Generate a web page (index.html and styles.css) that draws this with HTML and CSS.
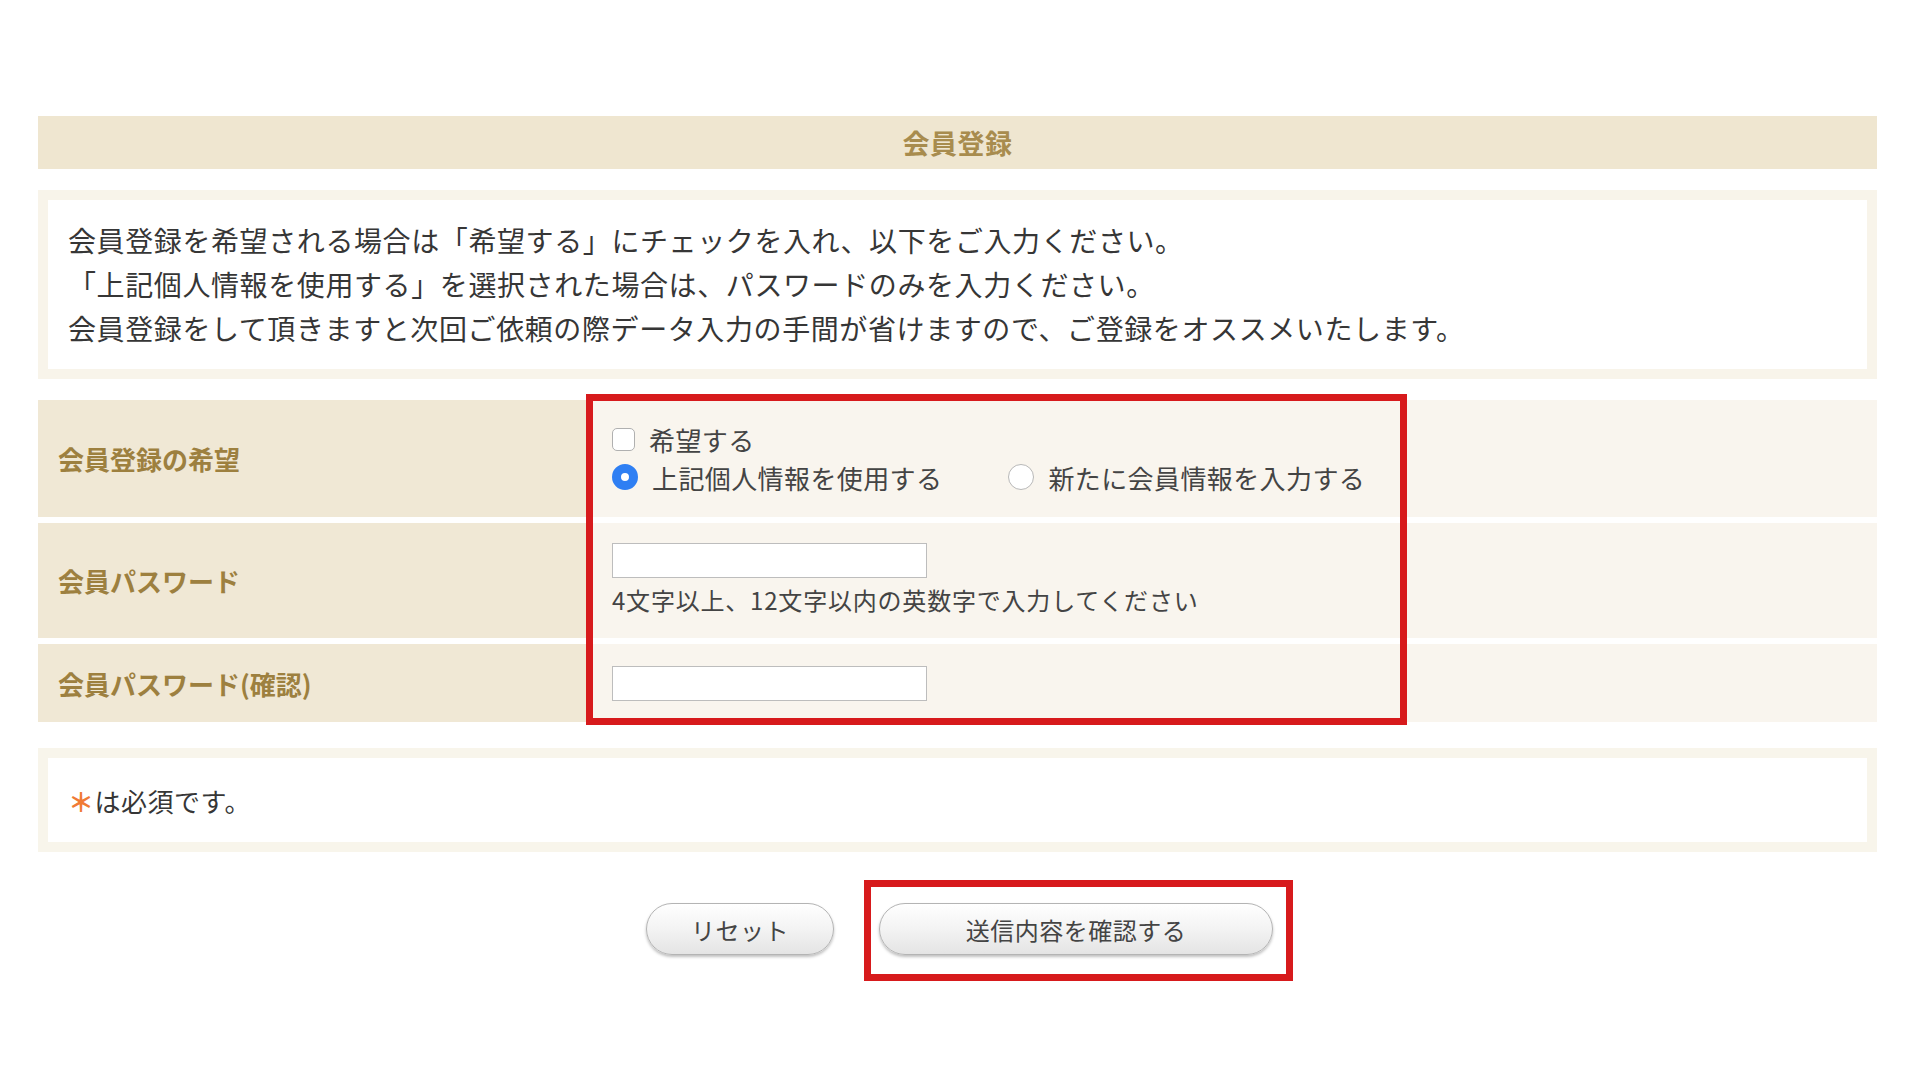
FILE: index.html
```html
<!DOCTYPE html>
<html lang="ja">
<head>
  <meta charset="UTF-8" />
  <meta name="viewport" content="width=device-width, initial-scale=1" />
  <title>会員登録</title>
  <link rel="stylesheet" href="styles.css">
</head>
<body>
  <div class="page">

    <!-- ── Title ─────────────────────────────────────────── -->
    <h2 class="title-bar">会員登録</h2>

    <!-- ── Intro text ────────────────────────────────────── -->
    <div class="intro">
      <p>会員登録を希望される場合は「希望する」にチェックを入れ、以下をご入力ください。</p>
      <p>「上記個人情報を使用する」を選択された場合は、パスワードのみを入力ください。</p>
      <p>会員登録をして頂きますと次回ご依頼の際データ入力の手間が省けますので、ご登録をオススメいたします。</p>
    </div>

    <!-- ── Member form ───────────────────────────────────── -->
    <div class="form">
      <div class="label">会員登録の希望</div>
      <div class="value">
        <label class="option-line">
          <input type="checkbox" class="check" />
          <span>希望する</span>
        </label>
        <div class="option-line">
          <label class="radio-item">
            <input type="radio" name="member" class="radio" checked />
            <span>上記個人情報を使用する</span>
          </label>
          <label class="radio-item">
            <input type="radio" name="member" class="radio" />
            <span>新たに会員情報を入力する</span>
          </label>
        </div>
      </div>

      <div class="label">会員パスワード</div>
      <div class="value">
        <input type="password" class="text-input" />
        <p class="help">4文字以上、12文字以内の英数字で入力してください</p>
      </div>

      <div class="label">会員パスワード(確認)</div>
      <div class="value value-single">
        <input type="password" class="text-input" />
      </div>

      <div class="mark-box"></div>
    </div>

    <!-- ── Note ──────────────────────────────────────────── -->
    <div class="note">
      <span class="req">＊</span>は必須です。
    </div>

    <!-- ── Buttons ───────────────────────────────────────── -->
    <div class="actions">
      <button type="reset" class="btn btn-reset">リセット</button>
      <div class="submit-wrap">
        <button type="submit" class="btn btn-submit">送信内容を確認する</button>
        <div class="mark-box mark-submit"></div>
      </div>
    </div>

  </div>
</body>
</html>
```

FILE: styles.css
```css
body {
  margin: 0;
  background: #fff;
  color: #363636;
  font-family: "Noto Sans CJK JP", "Noto Sans", sans-serif;
}
.page {
  padding: 116px 43px 100px 38px;
}
p {
  margin: 0;
}

/* title */
.title-bar {
  margin: 0;
  height: 53px;
  line-height: 53px;
  background: #efe6d0;
  color: #a88c4e;
  font-size: 27px;
  font-weight: bold;
  letter-spacing: 0.5px;
  text-align: center;
}

/* intro */
.intro {
  margin-top: 21px;
  border: 10px solid #f8f4ea;
  background: #fff;
  padding: 18px 20px 19px;
  font-size: 28px;
  line-height: 44px;
  letter-spacing: 0.6px;
}

/* form grid */
.form {
  position: relative;
  margin-top: 21px;
  display: grid;
  grid-template-columns: 549px 1fr;
  row-gap: 6px;
}
.label {
  display: flex;
  align-items: center;
  padding: 0 20px;
  background: #f0e8d5;
  color: #9d803f;
  font-size: 26px;
  font-weight: bold;
}
.value {
  background: #f9f5ee;
  padding: 20px 25px 21px;
  color: #444;
  font-size: 26px;
  letter-spacing: 0.4px;
}
.value-single {
  padding-top: 22px;
}
.option-line {
  display: flex;
  align-items: center;
  height: 38px;
}
.radio-item {
  display: flex;
  align-items: center;
}
.radio-item + .radio-item {
  margin-left: 66px;
}
.check,
.radio {
  appearance: none;
  margin: 0 14px 0 0;
  background: #fff;
  flex: none;
}
.check {
  width: 23px;
  height: 23px;
  border: 1.5px solid #b0b0b0;
  border-radius: 5px;
}
.radio {
  width: 26px;
  height: 26px;
  border: 1.5px solid #b8b8b8;
  border-radius: 50%;
}
.radio:checked {
  border: 9px solid #2f7ff3;
}
.text-input {
  display: block;
  box-sizing: border-box;
  width: 315px;
  height: 35px;
  margin: 0;
  border: 1px solid #bdbdbd;
  background: #fff;
}
.help {
  margin-top: 5px;
  font-size: 24px;
  line-height: 34px;
  letter-spacing: 0.8px;
}

/* red annotation frames */
.mark-box {
  position: absolute;
  top: -6px;
  left: 548px;
  width: 821px;
  height: 331px;
  box-sizing: border-box;
  border: 7px solid #d71a1c;
}
.mark-submit {
  top: -23px;
  left: -15px;
  width: auto;
  height: auto;
  right: -20px;
  bottom: -26px;
}

/* note */
.note {
  margin-top: 26px;
  border: 10px solid #f8f5eb;
  background: #fff;
  height: 84px;
  display: flex;
  align-items: center;
  padding: 0 20px;
  font-size: 26px;
  letter-spacing: 0.5px;
}
.req {
  color: #f07a35;
  font-weight: bold;
}

/* buttons */
.actions {
  margin-top: 51px;
  display: flex;
  justify-content: center;
  gap: 45px;
  padding-left: 4px;
}
.submit-wrap {
  position: relative;
}
.btn {
  display: block;
  height: 52px;
  border: 1px solid #b4b4b4;
  border-radius: 26px;
  background: linear-gradient(#ffffff, #f3f3f3 50%, #e4e4e4);
  box-shadow: 0 2px 3px rgba(0, 0, 0, 0.25);
  color: #444;
  font-family: inherit;
  font-size: 24px;
  letter-spacing: 0.5px;
  padding: 0;
}
.btn-reset {
  width: 188px;
}
.btn-submit {
  width: 394px;
}
```
